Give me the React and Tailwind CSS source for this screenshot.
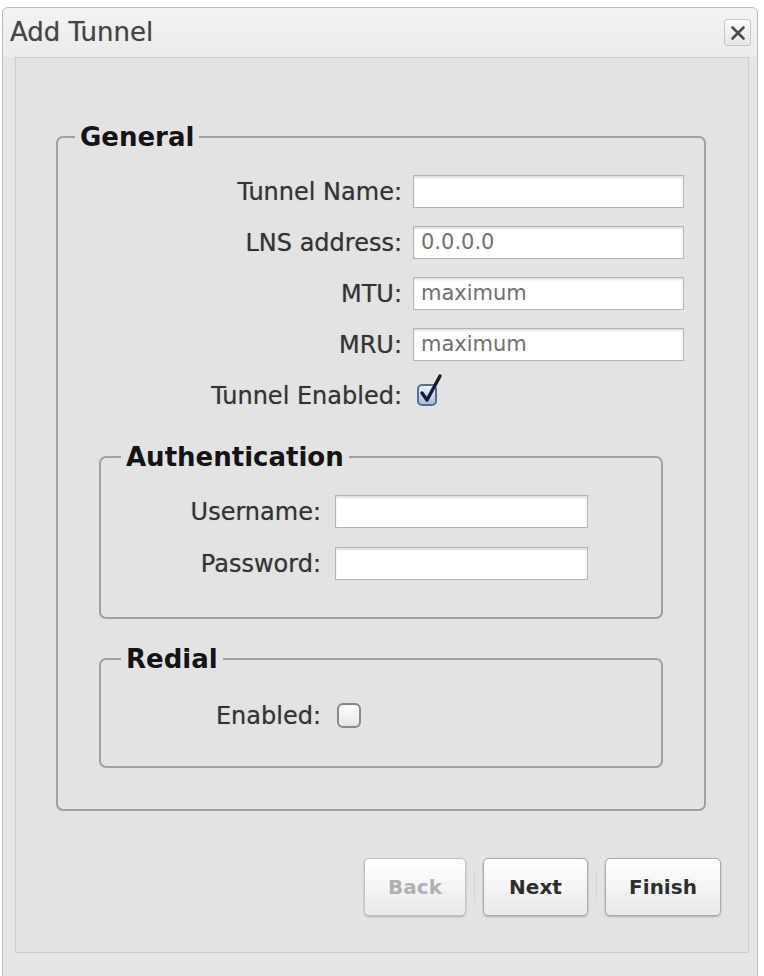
import React from 'react';

const font = { fontFamily: '"DejaVu Sans", Verdana, sans-serif' };

function TextInput({ value = '', width }) {
  return (
    <div
      className={`h-[33px] ${width} bg-white border border-[#b4b4b4] shadow-[inset_0_2px_2px_rgba(0,0,0,0.12)] flex items-center px-[7px] text-[21px] text-[#707070]`}
    >
      {value}
    </div>
  );
}

function CheckedBox() {
  return (
    <svg width="30" height="34" viewBox="0 0 30 34" className="block">
      <defs>
        <linearGradient id="cbfill" x1="0" y1="0" x2="0" y2="1">
          <stop offset="0" stopColor="#f1f5fc" />
          <stop offset="1" stopColor="#a3badf" />
        </linearGradient>
      </defs>
      <rect x="2" y="12" width="18" height="20" rx="4" fill="url(#cbfill)" stroke="#556d9c" strokeWidth="2" />
      <path d="M6 20 L11 27 L24 3" fill="none" stroke="#111b33" strokeWidth="3.4" strokeLinecap="round" strokeLinejoin="round" />
    </svg>
  );
}

function EmptyBox() {
  return (
    <div className="w-[24px] h-[25px] rounded-[6px] border-2 border-[#8a8a8a] bg-gradient-to-b from-white to-[#e6e6e6]" />
  );
}

function Row({ label, labelWidth, gap, children }) {
  return (
    <div className="flex items-center h-[33px]">
      <div className={`${labelWidth} text-right text-[24px] text-[#333] leading-none [text-shadow:0_0_1px_rgba(0,0,0,0.35)]`}>
        {label}
      </div>
      <div className={gap}>{children}</div>
    </div>
  );
}

function Button({ children, width, disabled }) {
  return (
    <button
      className={`${width} h-[58px] rounded-[5px] border bg-gradient-to-b from-white to-[#e9e9e9] shadow-[0_1px_2px_rgba(0,0,0,0.25)] text-[20px] font-bold ${
        disabled ? 'text-[#b0b0b0] border-[#c4c4c4]' : 'text-[#2e2e2e] border-[#a9a9a9]'
      }`}
    >
      {children}
    </button>
  );
}

const legendCls = 'px-[5px] text-[26px] font-bold text-[#141414] leading-[30px]';
const boxCls = 'border-2 border-[#a0a0a0] rounded-[7px]';

export default function App() {
  return (
    <div className="w-[764px] h-[976px] bg-white pt-[7px] pl-[2px] overflow-hidden" style={font}>
      <div className="w-[756px] h-[975px] border border-[#bdbdbd] rounded-t-[6px] bg-[#e6e6e6] flex flex-col">
        {/* Title bar */}
        <div className="h-[49px] flex items-center justify-between pl-[7px] pr-[6px] rounded-t-[6px] bg-gradient-to-b from-[#f3f3f3] to-[#ebebeb]">
          <span className="text-[26px] text-[#444] [text-shadow:0_0_1px_rgba(0,0,0,0.3)]">Add Tunnel</span>
          <div className="w-[27px] h-[27px] rounded-[3px] border border-[#c6c6c6] bg-gradient-to-b from-[#fafafa] to-[#e6e6e6] flex items-center justify-center">
            <svg width="16" height="16" viewBox="0 0 16 16">
              <path d="M2.5 2.5 L13.5 13.5 M13.5 2.5 L2.5 13.5" stroke="#4a4a4a" strokeWidth="2.6" strokeLinecap="round" />
            </svg>
          </div>
        </div>

        {/* Content panel */}
        <div className="ml-[12px] w-[734px] h-[896px] border border-[#cdcdcd] bg-[#e3e3e3] flex flex-col">
          <fieldset className={`ml-[40px] mt-[64px] w-[650px] pt-[23px] pb-[41px] ${boxCls}`}>
            <legend className={`ml-[17px] ${legendCls}`}>General</legend>
            <div className="flex flex-col gap-[18px]">
              <Row label="Tunnel Name:" labelWidth="w-[344px]" gap="ml-[11px]">
                <TextInput width="w-[271px]" />
              </Row>
              <Row label="LNS address:" labelWidth="w-[344px]" gap="ml-[11px]">
                <TextInput width="w-[271px]" value="0.0.0.0" />
              </Row>
              <Row label="MTU:" labelWidth="w-[344px]" gap="ml-[11px]">
                <TextInput width="w-[271px]" value="maximum" />
              </Row>
              <Row label="MRU:" labelWidth="w-[344px]" gap="ml-[11px]">
                <TextInput width="w-[271px]" value="maximum" />
              </Row>
              <Row label="Tunnel Enabled:" labelWidth="w-[344px]" gap="ml-[14px] -mt-[12px]">
                <CheckedBox />
              </Row>
            </div>

            <fieldset className={`mx-[41px] mt-[30px] pt-[23px] pb-[37px] ${boxCls}`}>
              <legend className={`ml-[20px] ${legendCls}`}>Authentication</legend>
              <div className="flex flex-col gap-[19px]">
                <Row label="Username:" labelWidth="w-[220px]" gap="ml-[14px]">
                  <TextInput width="w-[253px]" />
                </Row>
                <Row label="Password:" labelWidth="w-[220px]" gap="ml-[14px]">
                  <TextInput width="w-[253px]" />
                </Row>
              </div>
            </fieldset>

            <fieldset className={`mx-[41px] mt-[25px] pt-[25px] pb-[34px] ${boxCls}`}>
              <legend className={`ml-[20px] ${legendCls}`}>Redial</legend>
              <Row label="Enabled:" labelWidth="w-[220px]" gap="ml-[16px]">
                <EmptyBox />
              </Row>
            </fieldset>
          </fieldset>

          {/* Buttons */}
          <div className="mt-[47px] pr-[27px] flex justify-end items-center">
            <Button width="w-[102px]" disabled>Back</Button>
            <div className="mx-[8px] w-px h-[30px] bg-[#c9d7e8]" />
            <Button width="w-[105px]">Next</Button>
            <div className="mx-[8px] w-px h-[30px] bg-[#c9d7e8]" />
            <Button width="w-[116px]">Finish</Button>
          </div>
        </div>
      </div>
    </div>
  );
}
